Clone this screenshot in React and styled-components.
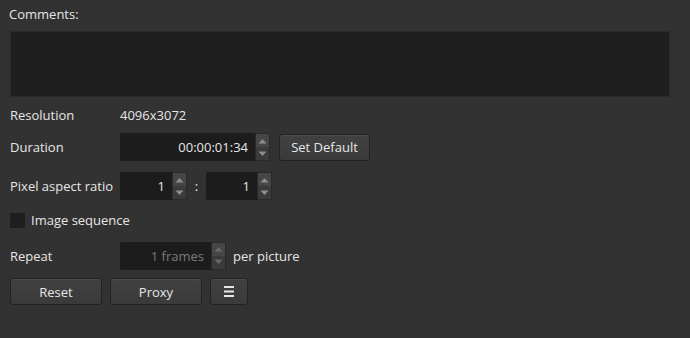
import React from "react";
import styled, { createGlobalStyle } from "styled-components";

const GlobalStyle = createGlobalStyle`
  html, body {
    margin: 0;
    padding: 0;
    background: #323232;
  }
  body {
    font-family: "Open Sans", "Noto Sans", sans-serif;
    font-size: 13px;
    color: #e6e6e6;
  }
`;

const Panel = styled.div`
  width: 690px;
  height: 338px;
  box-sizing: border-box;
  padding: 4px 20px 0 9px;
  background: #323232;
  display: flex;
  flex-direction: column;
`;

const Caption = styled.div`
  height: 20px;
  line-height: 20px;
  margin-bottom: 7px;
`;

const Comments = styled.div`
  height: 66px;
  margin-left: 1px;
  background: #1f1f1f;
  border: 1px solid #2a2a2a;
  box-sizing: border-box;
  margin-bottom: 6px;
`;

const Row = styled.div`
  display: flex;
  align-items: center;
  height: ${(p) => p.h || 28}px;
  margin-top: ${(p) => p.mt || 0}px;
  gap: ${(p) => p.gap || 0}px;
`;

const Label = styled.div`
  width: 110px;
  padding-left: 1px;
  flex: none;
  white-space: nowrap;
`;

const Value = styled.div`
  color: #e6e6e6;
`;

const Spin = styled.div`
  display: flex;
  width: ${(p) => p.w}px;
  height: 28px;
  background: #1c1c1c;
  border-radius: 2px;
  box-sizing: border-box;
  flex: none;
`;

const SpinText = styled.div`
  flex: 1;
  text-align: right;
  line-height: 28px;
  padding-right: 7px;
  color: ${(p) => (p.dim ? "#7b7b7b" : "#e6e6e6")};
`;

const Arrows = styled.div`
  width: 15px;
  display: flex;
  flex-direction: column;
  background: #3a3a3a;
  border: 1px solid #2a2a2a;
  border-radius: 2px;
  box-sizing: border-box;
`;

const Arrow = styled.div`
  flex: 1;
  display: flex;
  align-items: center;
  justify-content: center;
  background: ${(p) => (p.up ? "#464646" : "#3b3b3b")};
`;

const Tri = ({ up, dim }) => (
  <svg width="9" height="6" viewBox="0 0 9 6">
    <path
      d={up ? "M0.5 5.5 L4.5 1 L8.5 5.5 Z" : "M0.5 0.5 L4.5 5 L8.5 0.5 Z"}
      fill={dim ? "#6a6a6a" : "#8e8e8e"}
    />
  </svg>
);

const SpinBox = ({ w, value, dim }) => (
  <Spin w={w}>
    <SpinText dim={dim}>{value}</SpinText>
    <Arrows>
      <Arrow up>
        <Tri up dim={dim} />
      </Arrow>
      <Arrow>
        <Tri dim={dim} />
      </Arrow>
    </Arrows>
  </Spin>
);

const Button = styled.button`
  width: ${(p) => p.w}px;
  height: 27px;
  background: linear-gradient(#414141, #3a3a3a);
  border: 1px solid #222;
  box-shadow: inset 0 1px 0 #4c4c4c;
  border-radius: 3px;
  color: #e6e6e6;
  font-family: inherit;
  font-size: 13px;
  padding: 0;
  flex: none;
  display: flex;
  align-items: center;
  justify-content: center;
`;

const Colon = styled.div`
  width: 19px;
  text-align: center;
`;

const Check = styled.div`
  width: 15px;
  height: 15px;
  background: #1e1e1e;
  border-radius: 1px;
  margin-left: 1px;
  margin-right: 6px;
`;

const Suffix = styled.div`
  margin-left: 7px;
`;

const MenuIcon = () => (
  <svg width="10" height="11" viewBox="0 0 10 11">
    <rect x="0" y="0" width="10" height="2" fill="#e6e6e6" />
    <rect x="0" y="4.5" width="10" height="2" fill="#e6e6e6" />
    <rect x="0" y="9" width="10" height="2" fill="#e6e6e6" />
  </svg>
);

export default function App() {
  return (
    <>
      <GlobalStyle />
      <Panel>
        <Caption>Comments:</Caption>
        <Comments />
        <Row h={24}>
          <Label>Resolution</Label>
          <Value>4096x3072</Value>
        </Row>
        <Row mt={6}>
          <Label>Duration</Label>
          <SpinBox w={150} value="00:00:01:34" />
          <Button w={91} style={{ marginLeft: 9 }}>
            Set Default
          </Button>
        </Row>
        <Row mt={11}>
          <Label>Pixel aspect ratio</Label>
          <SpinBox w={67} value="1" />
          <Colon>:</Colon>
          <SpinBox w={66} value="1" />
        </Row>
        <Row mt={12} h={16}>
          <Check />
          <span>Image sequence</span>
        </Row>
        <Row mt={14} h={27}>
          <Label>Repeat</Label>
          <SpinBox w={106} value="1 frames" dim />
          <Suffix>per picture</Suffix>
        </Row>
        <Row mt={9} h={27} gap={8}>
          <Button w={92} style={{ marginLeft: 1 }}>
            Reset
          </Button>
          <Button w={92}>Proxy</Button>
          <Button w={38}>
            <MenuIcon />
          </Button>
        </Row>
      </Panel>
    </>
  );
}
